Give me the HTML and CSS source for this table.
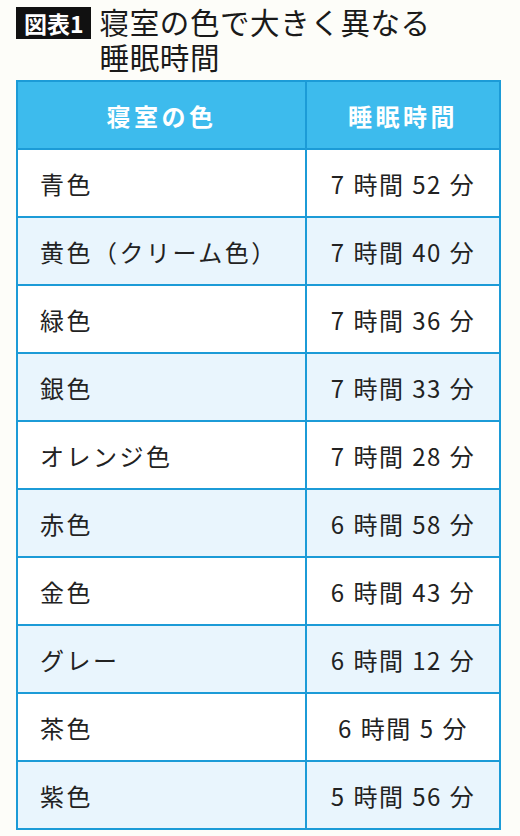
FILE: index.html
```html
<!DOCTYPE html>
<html lang="ja">
<head>
<meta charset="utf-8">
<link rel="stylesheet" href="styles.css">
</head>
<body>
<div class="page">
  <div class="heading">
    <span class="badge">図表1</span>
    <h1 class="title">寝室の色で大きく異なる<br>睡眠時間</h1>
  </div>
  <table class="sleep">
    <thead>
      <tr><th class="c1">寝室の色</th><th class="c2">睡眠時間</th></tr>
    </thead>
    <tbody>
      <tr><td class="c1">青色</td><td class="c2">7 時間 52 分</td></tr>
      <tr><td class="c1">黄色（クリーム色）</td><td class="c2">7 時間 40 分</td></tr>
      <tr><td class="c1">緑色</td><td class="c2">7 時間 36 分</td></tr>
      <tr><td class="c1">銀色</td><td class="c2">7 時間 33 分</td></tr>
      <tr><td class="c1">オレンジ色</td><td class="c2">7 時間 28 分</td></tr>
      <tr><td class="c1">赤色</td><td class="c2">6 時間 58 分</td></tr>
      <tr><td class="c1">金色</td><td class="c2">6 時間 43 分</td></tr>
      <tr><td class="c1">グレー</td><td class="c2">6 時間 12 分</td></tr>
      <tr><td class="c1">茶色</td><td class="c2">6 時間 5 分</td></tr>
      <tr><td class="c1">紫色</td><td class="c2">5 時間 56 分</td></tr>
    </tbody>
  </table>
</div>
</body>
</html>
```
FILE: styles.css
```css
html, body {
  margin: 0;
  padding: 0;
  background: #fdfdf9;
}
.page {
  width: 520px;
  height: 836px;
  font-family: "Noto Sans CJK JP", "Noto Sans", sans-serif;
  color: #222;
  padding: 7px 0 0 16px;
  box-sizing: border-box;
}
.heading {
  display: flex;
  align-items: flex-start;
  gap: 9px;
}
.badge {
  display: inline-block;
  background: #111;
  color: #fff;
  font-weight: 700;
  font-size: 23px;
  line-height: 32px;
  height: 32px;
  padding: 0 7px 0 8px;
  letter-spacing: 0;
}
.title {
  margin: 0;
  font-weight: 400;
  font-size: 29.5px;
  line-height: 35px;
  letter-spacing: 0.6px;
  color: #1a1a1a;
  margin-top: -3px;
}
.sleep {
  margin-top: 6px;
  border-collapse: collapse;
  width: 485px;
  table-layout: fixed;
}
.sleep th, .sleep td {
  border: 2px solid #1c9bd7;
  height: 68px;
  padding: 0;
  font-size: 24px;
  box-sizing: border-box;
}
.sleep th {
  background: #3dbbed;
  color: #fff;
  font-weight: 700;
  letter-spacing: 3.5px;
  text-align: center;
}
.sleep th.c1 { width: 289px; }
.sleep td.c1 {
  padding-left: 22px;
  letter-spacing: 2.5px;
}
.sleep td.c2 {
  text-align: center;
  letter-spacing: 1.5px;
  word-spacing: 1px;
}
.sleep tbody tr:nth-child(even) td {
  background: #e9f5fd;
}
.sleep tbody tr:nth-child(odd) td {
  background: #fff;
}
```
